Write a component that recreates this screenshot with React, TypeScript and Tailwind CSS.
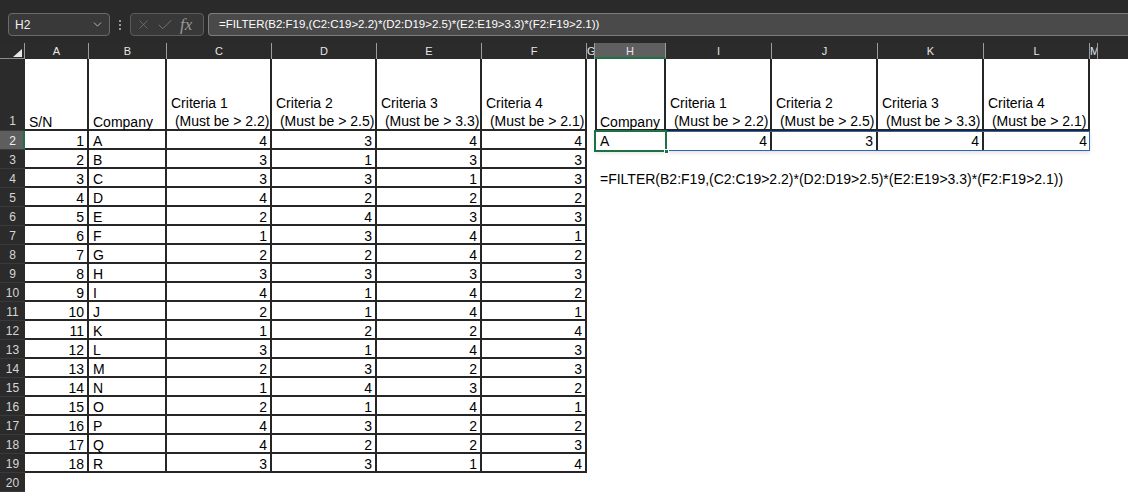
import { Check, ChevronDown, X } from "lucide-react";

const rows: [number, string, number, number, number, number][] = [
  [1, "A", 4, 3, 4, 4],
  [2, "B", 3, 1, 3, 3],
  [3, "C", 3, 3, 1, 3],
  [4, "D", 4, 2, 2, 2],
  [5, "E", 2, 4, 3, 3],
  [6, "F", 1, 3, 4, 1],
  [7, "G", 2, 2, 4, 2],
  [8, "H", 3, 3, 3, 3],
  [9, "I", 4, 1, 4, 2],
  [10, "J", 2, 1, 4, 1],
  [11, "K", 1, 2, 2, 4],
  [12, "L", 3, 1, 4, 3],
  [13, "M", 2, 3, 2, 3],
  [14, "N", 1, 4, 3, 2],
  [15, "O", 2, 1, 4, 1],
  [16, "P", 4, 3, 2, 2],
  [17, "Q", 4, 2, 2, 3],
  [18, "R", 3, 3, 1, 4],
];

const formula = "=FILTER(B2:F19,(C2:C19>2.2)*(D2:D19>2.5)*(E2:E19>3.3)*(F2:F19>2.1))";

// dark cell border used inside both tables
const line = "shrink-0 border-r-2 border-b-2 border-[#262626]";
const num = "pr-[3px] text-right pt-[4px] leading-[13px]";
const txt = "pl-[4px] pt-[4px] leading-[13px]";

const headers = [
  { l: "A", w: "w-[64px]" },
  { l: "B", w: "w-[78px]" },
  { l: "C", w: "w-[105px]" },
  { l: "D", w: "w-[105px]" },
  { l: "E", w: "w-[105px]" },
  { l: "F", w: "w-[105px]" },
  { l: "G", w: "w-[8px]" },
  { l: "H", w: "w-[71px]" },
  { l: "I", w: "w-[106px]" },
  { l: "J", w: "w-[106px]" },
  { l: "K", w: "w-[106px]" },
  { l: "L", w: "w-[106px]" },
  { l: "M", w: "w-[8px]" },
];

function RowHead({ n, active }: { n: number; active?: boolean }) {
  return (
    <div
      className={
        active
          ? "w-[25px] shrink-0 bg-[#5e5e5e] border-r-2 border-[#1e7145] border-b border-b-[#3a3a3a] pt-[4px] pl-[2px] text-center text-[12px] leading-[13px] text-[#f0f0f0]"
          : "w-[25px] shrink-0 bg-[#2b2b2b] border-b border-[#3a3a3a] pt-[4px] text-center text-[12px] leading-[13px] text-[#d6d6d6]"
      }
    >
      {n}
    </div>
  );
}

function Toolbar() {
  return (
    <div className="flex h-[43px] items-start bg-[#2a2a2a] pt-[13px] pl-[8px]">
      <div className="flex h-[23px] w-[102px] items-center justify-between rounded-[4px] border border-[#6a6a6a] bg-[#393939] pl-[6px] pr-[5px] text-[12px] text-[#f2f2f2]">
        <span>H2</span>
        <ChevronDown className="h-[13px] w-[13px] text-[#d0d0d0]" strokeWidth={1.5} />
      </div>
      <div className="flex h-[23px] w-[20px] flex-col items-center justify-center gap-[2px]">
        <span className="h-[2px] w-[2px] rounded-full bg-[#bdbdbd]" />
        <span className="h-[2px] w-[2px] rounded-full bg-[#bdbdbd]" />
        <span className="h-[2px] w-[2px] rounded-full bg-[#bdbdbd]" />
      </div>
      <div className="flex h-[23px] w-[74px] items-center rounded-[4px] border border-[#5c5c5c] bg-[#383838] pl-[5px] text-[#7e7e7e]">
        <X className="h-[15px] w-[15px]" strokeWidth={1.1} />
        <Check className="ml-[5px] h-[18px] w-[18px]" strokeWidth={1.1} />
        <span className="ml-[6px] font-['Liberation_Serif',serif] text-[17px] italic leading-none text-[#9a9a9a]">fx</span>
      </div>
      <div className="ml-[4px] flex h-[23px] flex-1 items-center rounded-l-[4px] border border-r-0 border-[#7d7d7d] bg-[#4a4a4a] pl-[10px] text-[11.5px] text-white whitespace-nowrap">
        {formula}
      </div>
    </div>
  );
}

function HeaderRow() {
  return (
    <div className="flex h-[16px] bg-[#2b2b2b] text-[11px] leading-[16px] text-[#e6e6e6]">
      <div className="relative w-[25px] shrink-0 border-r border-[#9c9c9c] border-b border-b-[#8c8c8c]">
        <svg className="absolute left-0 top-0" width="25" height="16" viewBox="0 0 25 16">
          <polygon points="13,14 22,14 22,6" fill="#e8e8e8" />
        </svg>
      </div>
      {headers.map((h) =>
        h.l === "H" ? (
          <div key={h.l} className={`${h.w} shrink-0 border-r border-[#9c9c9c] border-b-2 border-b-[#1e7145] bg-[#5f5f5f] text-center`}>
            {h.l}
          </div>
        ) : (
          <div key={h.l} className={`${h.w} shrink-0 border-r border-[#9c9c9c] text-center overflow-hidden`}>
            {h.l}
          </div>
        )
      )}
      <div className="flex-1" />
    </div>
  );
}

function Crit({ n, gt, w }: { n: number; gt: string; w: string }) {
  return (
    <div className={`${w} ${line} flex flex-col justify-end pl-[4px] leading-[18px] whitespace-pre`}>
      <span className="translate-y-[1px]">Criteria {n}</span>
      <span className="translate-y-[1px]">{` (Must be > ${gt})`}</span>
    </div>
  );
}

export default function App() {
  return (
    <div className="h-[494px] w-[1128px] overflow-hidden bg-white font-['Liberation_Sans',Arial,sans-serif] text-[14px] text-black">
      <Toolbar />
      <div className="relative">
        <HeaderRow />

        {/* row 1: headings */}
        <div className="flex h-[72px]">
          <div className="w-[25px] shrink-0 bg-[#2b2b2b] border-b border-[#3a3a3a] flex items-end justify-center pb-[2px] text-[12px] leading-[13px] text-[#d6d6d6]">
            1
          </div>
          <div className={`w-[64px] ${line} flex items-end pl-[4px] leading-[13px]`}>S/N</div>
          <div className={`w-[78px] ${line} flex items-end pl-[4px] leading-[13px]`}>Company</div>
          <Crit n={1} gt="2.2" w="w-[105px]" />
          <Crit n={2} gt="2.5" w="w-[105px]" />
          <Crit n={3} gt="3.3" w="w-[105px]" />
          <Crit n={4} gt="2.1" w="w-[105px]" />
          <div className="w-[8px] shrink-0" />
          <div className={`w-[71px] ${line} border-l-2 flex items-end pl-[3px] leading-[13px]`}>Company</div>
          <Crit n={1} gt="2.2" w="w-[106px]" />
          <Crit n={2} gt="2.5" w="w-[106px]" />
          <Crit n={3} gt="3.3" w="w-[106px]" />
          <Crit n={4} gt="2.1" w="w-[106px]" />
        </div>

        {rows.map((r, i) => (
          <div key={r[0]} className="flex h-[19px]">
            <RowHead n={i + 2} active={i === 0} />
            <div className={`w-[64px] ${line} ${num}`}>{r[0]}</div>
            <div className={`w-[78px] ${line} ${txt}`}>{r[1]}</div>
            <div className={`w-[105px] ${line} ${num}`}>{r[2]}</div>
            <div className={`w-[105px] ${line} ${num}`}>{r[3]}</div>
            <div className={`w-[105px] ${line} ${num}`}>{r[4]}</div>
            <div className={`w-[105px] ${line} ${num}`}>{r[5]}</div>
            <div className="w-[8px] shrink-0" />
            {i === 0 && (
              <>
                <div className="w-[71px] shrink-0 pl-[5px] pt-[4px] leading-[13px]">A</div>
                <div className={`w-[106px] shrink-0 border-r-2 border-[#262626] ${num}`}>4</div>
                <div className={`w-[106px] shrink-0 border-r-2 border-[#262626] ${num}`}>3</div>
                <div className={`w-[106px] shrink-0 border-r-2 border-[#262626] ${num}`}>4</div>
                <div className={`w-[106px] shrink-0 ${num}`}>4</div>
              </>
            )}
            {i === 2 && (
              <div className="shrink-0 pl-[5px] pt-[4px] leading-[13px] whitespace-nowrap">{formula}</div>
            )}
          </div>
        ))}

        <div className="flex h-[19px]">
          <RowHead n={20} />
        </div>

        {/* spill range outline H2:L2 */}
        <div className="pointer-events-none absolute left-[595px] top-[88px] h-[20px] w-[495px] border border-[#2f63b8] shadow-[0_2px_4px_rgba(0,0,0,0.12)]" />
        {/* active cell H2 */}
        <div className="pointer-events-none absolute left-[594px] top-[87px] h-[22px] w-[73px] border-2 border-[#1e7145]">
          <div className="absolute -bottom-[4px] -right-[4px] h-[5px] w-[5px] border border-white bg-[#1e7145]" />
        </div>
      </div>
    </div>
  );
}
